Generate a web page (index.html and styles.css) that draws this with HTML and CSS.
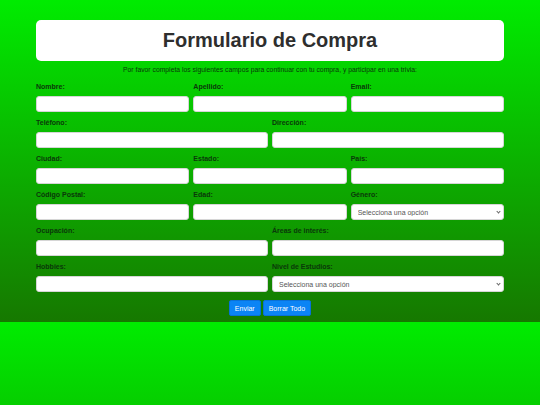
FILE: index.html
```html
<!DOCTYPE html>
<html lang="es">
<head>
<meta charset="utf-8">
<title>Formulario de Compra</title>
<link rel="stylesheet" href="styles.css">
</head>
<body>
<div class="page">
  <header class="title-box"><h1>Formulario de Compra</h1></header>
  <p class="intro">Por favor completa los siguientes campos para continuar con tu compra, y participar en una trivia:</p>
  <form class="form">
    <div class="row">
      <div class="field"><label>Nombre:</label><input type="text"></div>
      <div class="field"><label>Apellido:</label><input type="text"></div>
      <div class="field"><label>Email:</label><input type="text"></div>
    </div>
    <div class="row">
      <div class="field"><label>Teléfono:</label><input type="text"></div>
      <div class="field"><label>Dirección:</label><input type="text"></div>
    </div>
    <div class="row">
      <div class="field"><label>Ciudad:</label><input type="text"></div>
      <div class="field"><label>Estado:</label><input type="text"></div>
      <div class="field"><label>País:</label><input type="text"></div>
    </div>
    <div class="row">
      <div class="field"><label>Código Postal:</label><input type="text"></div>
      <div class="field"><label>Edad:</label><input type="text"></div>
      <div class="field"><label>Género:</label><div class="select-wrap"><select><option>Selecciona una opción</option></select></div></div>
    </div>
    <div class="row">
      <div class="field"><label>Ocupación:</label><input type="text"></div>
      <div class="field"><label>Áreas de interés:</label><input type="text"></div>
    </div>
    <div class="row">
      <div class="field"><label>Hobbies:</label><input type="text"></div>
      <div class="field"><label>Nivel de Estudios:</label><div class="select-wrap"><select><option>Selecciona una opción</option></select></div></div>
    </div>
    <div class="actions">
      <button type="button" class="btn">Enviar</button>
      <button type="button" class="btn">Borrar Todo</button>
    </div>
  </form>
</div>
</body>
</html>
```
FILE: styles.css
```css
html, body {
  margin: 0;
  padding: 0;
}
body {
  background: linear-gradient(to bottom, #00ec00, #167800);
  font-family: "Liberation Sans", Arial, sans-serif;
}
.page {
  padding: 20px 36px 6px;
}
.title-box {
  background: #ffffff;
  border-radius: 5px;
  height: 41px;
  display: flex;
  align-items: center;
  justify-content: center;
}
.title-box h1 {
  margin: 0;
  font-size: 20px;
  font-weight: bold;
  color: #2e2e2e;
}
.intro {
  margin: 5px 0 9px;
  font-size: 6.8px;
  line-height: 8px;
  text-align: center;
  color: #0a380a;
}
.form {
  margin: 0;
}
.row {
  display: flex;
  gap: 4px;
  margin-bottom: 7px;
}
.field {
  flex: 1;
  display: flex;
  flex-direction: column;
  min-width: 0;
}
.field label {
  font-size: 7px;
  line-height: 8px;
  font-weight: bold;
  color: #0a380a;
  margin-bottom: 5px;
}
.field input,
.field select {
  box-sizing: border-box;
  height: 16px;
  width: 100%;
  margin: 0;
  border: 1px solid #d6d6d6;
  border-radius: 3px;
  background: #ffffff;
  font-family: "Liberation Sans", Arial, sans-serif;
  font-size: 7px;
}
.select-wrap {
  position: relative;
}
.field select {
  appearance: none;
  -webkit-appearance: none;
  color: #555555;
  padding: 0 6px;
  display: block;
}
.select-wrap::after {
  content: "";
  position: absolute;
  right: 4px;
  top: 6px;
  width: 2px;
  height: 2px;
  border-right: 1px solid #666666;
  border-bottom: 1px solid #666666;
  transform: rotate(45deg);
  pointer-events: none;
}
.actions {
  display: flex;
  justify-content: center;
  gap: 2px;
  margin-top: 8px;
}
.btn {
  box-sizing: border-box;
  height: 16px;
  padding: 0 5px;
  border: 1px solid #0a70d6;
  border-radius: 2px;
  background: #0b84f5;
  color: #ffffff;
  font-family: "Liberation Sans", Arial, sans-serif;
  font-size: 7px;
}
```
